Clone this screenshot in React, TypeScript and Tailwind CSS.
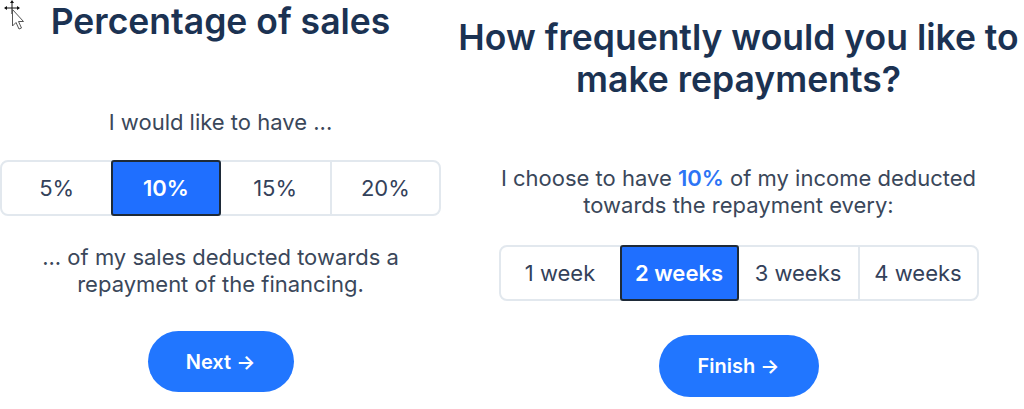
import React from "react";

const font = { fontFamily: "Inter, 'Noto Sans', sans-serif" };

function Segments({ items, active, cellW }: { items: string[]; active: number; cellW: string }) {
  return (
    <div className="flex h-[56px] rounded-lg border-2 border-[#e2e8ee] bg-white">
      {items.map((it, i) => (
        <div
          key={it}
          className={
            i === active
              ? `${cellW} flex items-center justify-center bg-[#1f6fff] text-white font-semibold border-2 border-[#1e2a38] rounded-[3px] -my-[2px]`
              : `${cellW} flex items-center justify-center text-[#33415a] ${i > 0 && i !== active + 1 ? "border-l-2 border-[#e2e8ee]" : ""}`
          }
        >
          {it}
        </div>
      ))}
    </div>
  );
}

function Cursor() {
  return (
    <svg className="absolute left-0 top-0" width="28" height="32" viewBox="0 0 28 32">
      <path d="M12 2 L12 14 M5 8 L19 8" stroke="#111" strokeWidth="1" />
      <path d="M12 0 L10 3 L14 3 Z M4 8 L7 6 L7 10 Z M20 8 L17 6 L17 10 Z" fill="#111" />
      <path d="M12.5 9.5 L12.5 26 L16 22.5 L19 29 L21.5 28 L18.5 21.5 L23.5 21.5 Z" fill="#fff" stroke="#555" strokeWidth="1" strokeLinejoin="round" />
    </svg>
  );
}

export default function App() {
  return (
    <div className="relative flex w-[1024px] h-[409px] bg-white" style={font}>
      <Cursor />
      <div className="w-[441px] flex flex-col items-center">
        <h1 className="mt-[1px] text-[35.5px] leading-[42px] font-semibold text-[#1b3252]">Percentage of sales</h1>
        <p className="mt-[65px] text-[22px] leading-[28px] text-[#3a475a]">I would like to have ...</p>
        <div className="mt-[24px] w-full text-[22px]">
          <Segments items={["5%", "10%", "15%", "20%"]} active={1} cellW="w-[110px]" />
        </div>
        <p className="mt-[28px] text-[22px] leading-[27px] text-[#3a475a] text-center w-[380px]">
          ... of my sales deducted towards a repayment of the financing.
        </p>
        <button className="mt-[33px] w-[146px] h-[61px] rounded-full bg-[#2176ff] text-white text-[20px] font-semibold">
          Next →
        </button>
      </div>
      <div className="ml-[14px] w-[567px] flex flex-col items-center">
        <h1 className="mt-[17px] text-[35.5px] leading-[42px] font-semibold text-[#1b3252] text-center">
          How frequently would you like to
          <br />
          make repayments?
        </h1>
        <p className="mt-[64px] text-[22px] leading-[27px] text-[#3a475a] text-center">
          I choose to have <span className="text-[#2d74f5] font-semibold">10%</span> of my income deducted
          <br />
          towards the repayment every:
        </p>
        <div className="mt-[26px] text-[22px]">
          <Segments items={["1 week", "2 weeks", "3 weeks", "4 weeks"]} active={1} cellW="w-[119px]" />
        </div>
        <button className="mt-[34px] w-[160px] h-[62px] rounded-full bg-[#2176ff] text-white text-[20px] font-semibold">
          Finish →
        </button>
      </div>
    </div>
  );
}
